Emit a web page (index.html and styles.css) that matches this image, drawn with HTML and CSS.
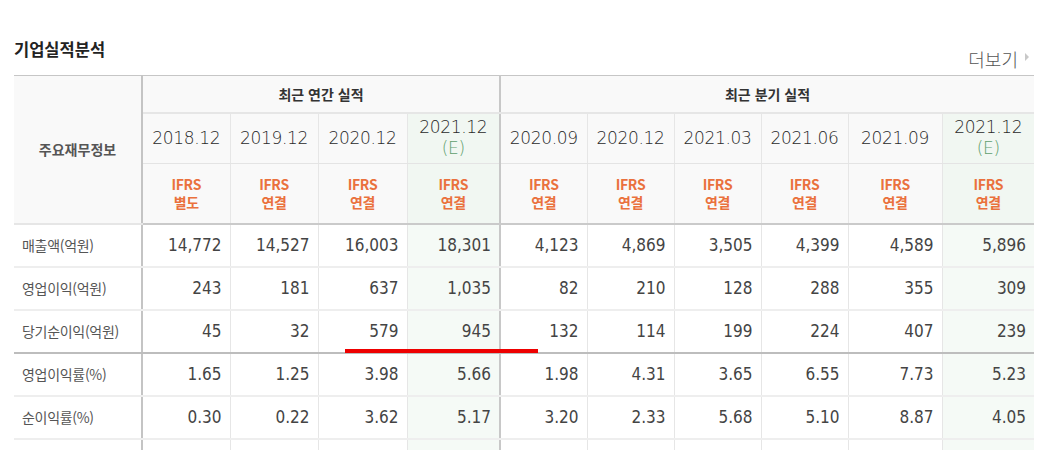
FILE: index.html
```html
<!DOCTYPE html>
<html lang="ko">
<head>
<meta charset="utf-8">
<link rel="stylesheet" href="styles.css">
</head>
<body>
<div class="wrap">
  <div class="head">
    <h2 class="title">기업실적분석</h2>
    <a class="more">더보기<span class="tri"></span></a>
  </div>
  <div class="tablebox">
    <table class="perf">
      <colgroup>
        <col class="c-label"><col class="c88"><col class="c88"><col class="c89"><col class="c93">
        <col class="c87"><col class="c87"><col class="c87"><col class="c87"><col class="c94"><col class="c92">
      </colgroup>
      <thead>
        <tr class="r-group">
          <th class="label-head" rowspan="3">주요재무정보</th>
          <th class="grp split" colspan="4">최근 연간 실적</th>
          <th class="grp" colspan="6">최근 분기 실적</th>
        </tr>
        <tr class="r-date">
          <th>2018.12</th><th>2019.12</th><th>2020.12</th><th class="est split">2021.12<br><span class="e">(E)</span></th>
          <th>2020.09</th><th>2020.12</th><th>2021.03</th><th>2021.06</th><th>2021.09</th><th class="est">2021.12<br><span class="e">(E)</span></th>
        </tr>
        <tr class="r-ifrs">
          <th>IFRS<br>별도</th><th>IFRS<br>연결</th><th>IFRS<br>연결</th><th class="est split">IFRS<br>연결</th>
          <th>IFRS<br>연결</th><th>IFRS<br>연결</th><th>IFRS<br>연결</th><th>IFRS<br>연결</th><th>IFRS<br>연결</th><th class="est">IFRS<br>연결</th>
        </tr>
      </thead>
      <tbody>
        <tr>
          <th>매출액(억원)</th>
          <td>14,772</td><td>14,527</td><td>16,003</td><td class="est split">18,301</td>
          <td>4,123</td><td>4,869</td><td>3,505</td><td>4,399</td><td>4,589</td><td class="est">5,896</td>
        </tr>
        <tr>
          <th>영업이익(억원)</th>
          <td>243</td><td>181</td><td>637</td><td class="est split">1,035</td>
          <td>82</td><td>210</td><td>128</td><td>288</td><td>355</td><td class="est">309</td>
        </tr>
        <tr class="r-sep">
          <th>당기순이익(억원)</th>
          <td>45</td><td>32</td><td>579</td><td class="est split">945</td>
          <td>132</td><td>114</td><td>199</td><td>224</td><td>407</td><td class="est">239</td>
        </tr>
        <tr>
          <th>영업이익률(%)</th>
          <td>1.65</td><td>1.25</td><td>3.98</td><td class="est split">5.66</td>
          <td>1.98</td><td>4.31</td><td>3.65</td><td>6.55</td><td>7.73</td><td class="est">5.23</td>
        </tr>
        <tr>
          <th>순이익률(%)</th>
          <td>0.30</td><td>0.22</td><td>3.62</td><td class="est split">5.17</td>
          <td>3.20</td><td>2.33</td><td>5.68</td><td>5.10</td><td>8.87</td><td class="est">4.05</td>
        </tr>
        <tr>
          <th>&nbsp;</th>
          <td></td><td></td><td></td><td class="est split"></td>
          <td></td><td></td><td></td><td></td><td></td><td class="est"></td>
        </tr>
      </tbody>
    </table>
    <div class="redline"></div>
  </div>
</div>
</body>
</html>
```

FILE: styles.css
```css
* { box-sizing: border-box; }
html, body { margin: 0; padding: 0; background: #fff; }
body {
  font-family: "Noto Sans CJK KR", "Noto Sans", sans-serif;
  color: #333;
  overflow: hidden;
  height: 450px;
}
.wrap { padding-left: 14px; width: 1034px; }
.head {
  display: flex;
  justify-content: space-between;
  align-items: flex-end;
  height: 75px;
  padding-right: 5px;
}
.title {
  margin: 0 0 14px 0;
  font-size: 16.5px;
  font-weight: bold;
  color: #222;
}
.more {
  display: flex;
  align-items: center;
  font-size: 18px;
  color: #555;
  margin-bottom: 3px;
  font-weight: 300;
}
.tri {
  width: 0; height: 0;
  border-left: 4px solid #c8c8c8;
  border-top: 4px solid transparent;
  border-bottom: 4px solid transparent;
  margin-left: 7px;
  margin-top: -4px;
}
.tablebox { position: relative; }
.perf {
  width: 1020px;
  table-layout: fixed;
  border-collapse: collapse;
  border-top: 1px solid #c6c6c6;
}
.c-label { width: 128px; }
.c88 { width: 88px; }
.c89 { width: 89px; }
.c93 { width: 93px; }
.c87 { width: 87px; }
.c94 { width: 94px; }
.c92 { width: 92px; }
.perf th, .perf td {
  padding: 0;
  border-left: 1px solid #e6e6e6;
}
.perf thead th { background: #f9f9f9; font-weight: normal; }
.perf thead .est { background: #f1f7f2; }
.label-head {
  font-size: 14px;
  font-weight: bold !important;
  color: #555;
  border-left: none !important;
  border-right: 2px solid #c4c4c4;
  border-bottom: 2px solid #c8c8c8;
}
.perf tbody th { border-left: none; border-right: 2px solid #c4c4c4; }
.perf .split { border-right: 2px solid #c8c8c8; }
.r-group th { height: 37px; border-bottom: 2px solid #e6e6e6; }
.grp { font-size: 14px; font-weight: bold !important; color: #333; }
.r-date th {
  height: 51px;
  border-bottom: 1px solid #e4e4e4;
  font-family: "DejaVu Sans", sans-serif;
  font-weight: 200 !important;
  font-size: 17px;
  color: #2a2a2a;
  line-height: 21px;
  letter-spacing: -0.3px;
}
.r-date .e { color: #5f9f6f; }
.r-ifrs th {
  height: 60px;
  border-bottom: 2px solid #cacaca;
  font-size: 14px;
  font-weight: bold !important;
  color: #ea713d;
  line-height: 18px;
  letter-spacing: -0.3px;
}
.perf tbody th {
  height: 43px;
  text-align: left;
  padding-left: 8px;
  font-size: 14px;
  font-weight: normal;
  color: #555;
  letter-spacing: -0.3px;
}
.perf tbody td {
  text-align: right;
  padding-right: 8px;
  font-family: "DejaVu Sans Condensed", "DejaVu Sans", sans-serif;
  font-size: 17px;
  color: #444;
}
.perf tbody tr th, .perf tbody tr td { border-bottom: 2px solid #eeeeee; }
.perf tbody .est { background: #f5faf6; }
.perf tbody tr.r-sep th, .perf tbody tr.r-sep td { border-bottom: 2px solid #bdbdbd; }
.redline {
  position: absolute;
  left: 331px;
  top: 274px;
  width: 193px;
  height: 4px;
  background: #ee0000;
}
```
